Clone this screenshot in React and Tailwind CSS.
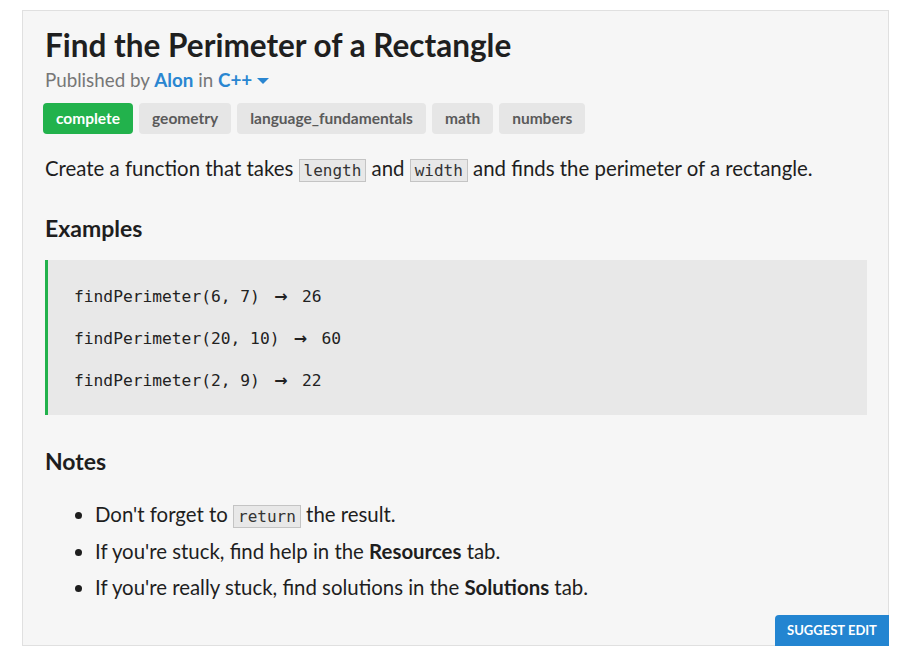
import React from "react";

const mono = "font-['DejaVu_Sans_Mono',monospace]";

function Code({ children }) {
  return (
    <code className={`${mono} text-[16px] leading-[20px] bg-[#e8e8e8] border border-[#c4c4c4] px-[4px] py-[1px] text-[#333]`}>
      {children}
    </code>
  );
}

function Tag({ children, green }) {
  return (
    <span
      className={
        green
          ? "h-[31px] flex items-center px-[13px] rounded-[4px] bg-[#22b24c] text-white text-[15.5px] font-bold"
          : "h-[31px] flex items-center px-[13px] rounded-[4px] bg-[#e6e6e6] text-[#5a5a5a] text-[15.5px] font-bold"
      }
    >
      {children}
    </span>
  );
}

function Example({ call, result }) {
  return (
    <div className="h-[42px] flex items-center">
      <span>{call}</span>
      <span className="inline-block w-[42px] text-center font-['DejaVu_Sans',sans-serif] font-bold text-[16px]">→</span>
      <span>{result}</span>
    </div>
  );
}

export default function App() {
  return (
    <div className="w-[902px] h-[650px] bg-white font-['Lato',sans-serif] text-[#1e1e1e] pt-[10px] pl-[22px]">
      <div className="relative w-[867px] h-[636px] bg-[#f6f6f6] border border-[#e0e0e0] pl-[22px] pr-[21px] pt-[15px]">
        <h1 className="text-[31.5px] font-bold leading-[38px] text-[#1f1f1f]">
          Find the Perimeter of a Rectangle
        </h1>
        <div className="text-[18.8px] leading-[26px] text-[#777] mt-[3px] flex items-center">
          <span>Published by&nbsp;</span>
          <span className="text-[#2a86d1] font-bold">Alon</span>
          <span>&nbsp;in&nbsp;</span>
          <span className="text-[#2a86d1] font-bold">C++</span>
          <svg width="12" height="8" viewBox="0 0 12 8" className="ml-[5px] mt-[1px]">
            <path d="M0 1 L12 1 L6 7 Z" fill="#2a86d1" />
          </svg>
        </div>
        <div className="flex gap-[6px] mt-[10px] -ml-[2px]">
          <Tag green>complete</Tag>
          <Tag>geometry</Tag>
          <Tag>language_fundamentals</Tag>
          <Tag>math</Tag>
          <Tag>numbers</Tag>
        </div>
        <p className="text-[20.4px] leading-[28px] mt-[20px]">
          Create a function that takes <Code>length</Code> and <Code>width</Code> and finds the perimeter of a rectangle.
        </p>
        <h2 className="text-[23px] font-bold leading-[30px] mt-[31px]">Examples</h2>
        <div className={`mt-[17px] bg-[#e8e8e8] border-l-[3px] border-[#22b24c] pl-[26px] pt-[16px] pb-[13px] ${mono} text-[16.25px] text-[#222]`}>
          <Example call="findPerimeter(6, 7)" result="26" />
          <Example call="findPerimeter(20, 10)" result="60" />
          <Example call="findPerimeter(2, 9)" result="22" />
        </div>
        <h2 className="text-[23px] font-bold leading-[30px] mt-[31px]">Notes</h2>
        <ul className="list-disc pl-[50px] mt-[24px] text-[20.4px] leading-[28px]">
          <li className="mb-[9px]">
            Don't forget to <Code>return</Code> the result.
          </li>
          <li className="mb-[8px]">
            If you're stuck, find help in the <b>Resources</b> tab.
          </li>
          <li>
            If you're really stuck, find solutions in the <b>Solutions</b> tab.
          </li>
        </ul>
        <div className="absolute right-[-1px] bottom-[-1px] w-[114px] h-[31px] bg-[#2385d1] rounded-tl-[4px] text-white text-[13px] font-bold flex items-center justify-center">
          SUGGEST EDIT
        </div>
      </div>
    </div>
  );
}
